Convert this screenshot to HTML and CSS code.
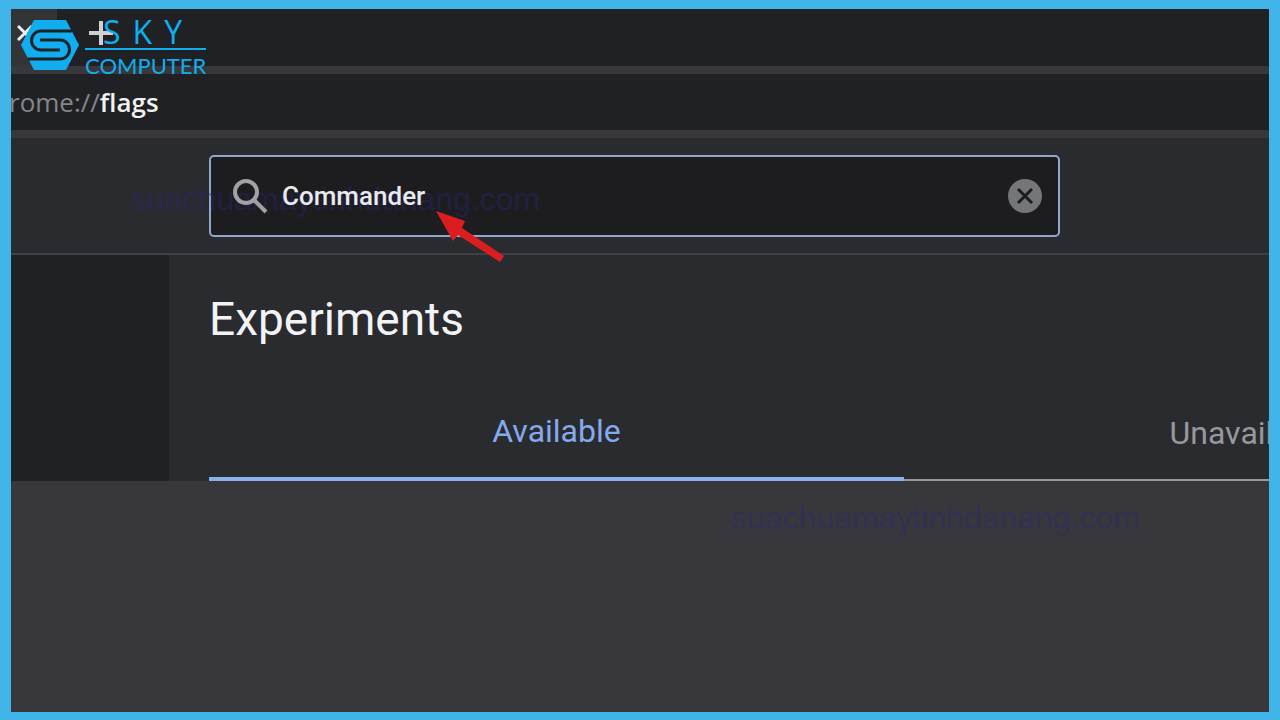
FILE: index.html
```html
<!DOCTYPE html>
<html lang="en">
<head>
    <meta charset="UTF-8">
    <meta name="viewport" content="width=device-width, initial-scale=1.0">
    <title>Experiments</title>
    <link rel="stylesheet" href="styles.css">
</head>
<body>
    <div class="tab-strip">
        <div class="tab">
            <button class="tab-close" aria-label="Close tab">
                <svg width="16" height="16" viewBox="0 0 16 16"><path d="M1 1L15 15M15 1L1 15"/></svg>
            </button>
        </div>
        <button class="tab-new" aria-label="New tab">
            <svg width="24" height="24" viewBox="0 0 24 24"><path d="M12 0V24M0 12H24"/></svg>
        </button>
    </div>

    <div class="address-bar"><span class="scheme">rome://</span><span class="host">flags</span></div>

    <header class="search-bar">
        <div class="search-box">
            <svg class="search-icon" width="36" height="36" viewBox="0 0 36 36">
                <circle cx="13" cy="14" r="11"/>
                <path d="M21 22L33 34"/>
            </svg>
            <input type="text" class="search-input" value="Commander" aria-label="Search flags">
            <button class="search-clear" aria-label="Clear search">
                <svg width="34" height="34" viewBox="0 0 34 34">
                    <circle cx="17" cy="17" r="17"/>
                    <path d="M10 10L24 24M24 10L10 24"/>
                </svg>
            </button>
            <svg class="arrow" width="74" height="54" viewBox="0 0 74 54">
                <path d="M3 2L32 12L29 19L71 47L67 53L25 26L20 32Z"/>
            </svg>
        </div>
    </header>

    <main class="content">
        <div class="side"></div>
        <div class="panel">
            <h1>Experiments</h1>
            <nav class="tabs">
                <a href="#available" class="active">Available</a>
                <a href="#unavailable">Unavailable</a>
            </nav>
        </div>
    </main>

    <div class="logo">
        <svg class="logo-mark" width="58" height="50" viewBox="0 0 58 50">
            <path class="hex" d="M13 0H45L58 25L45 50H13L0 25Z"/>
            <path class="line" d="M51 11H20A9.500 9.500 0 0 0 20 30H39"/>
            <path class="line" d="M19 20H39A9.500 9.500 0 0 1 39 39H7"/>
        </svg>
        <div class="logo-text">
            <span class="logo-name">SKY</span>
            <span class="logo-sub">COMPUTER</span>
        </div>
    </div>
    <span class="watermark watermark-top">suachuamaytinhdanang.com</span>
    <span class="watermark watermark-bottom">suachuamaytinhdanang.com</span>
</body>
</html>
```
FILE: styles.css
```css
* {
    box-sizing: border-box;
}

body {
    position: relative;
    margin: 0;
    min-height: 100vh;
    border: solid #41b4e9;
    border-width: 9px 11px 8px;
    background-color: #38383c;
    font-family: Roboto, sans-serif;
    overflow: hidden;
}

button {
    display: flex;
    padding: 0;
    border: none;
    background: none;
    cursor: pointer;
}

svg {
    fill: none;
}

/* Browser bars */
.tab-strip {
    display: flex;
    align-items: flex-start;
    gap: 32px;
    height: 65px;
    border-bottom: 8px solid #38383c;
    background-color: #202125;
}

.tab {
    width: 46px;
    height: 57px;
    padding: 16px 6px;
    background-color: #333438;
}

.tab-close svg {
    stroke: #eeeeee;
    stroke-width: 3;
}

.tab-new {
    padding-top: 12px;
}

.tab-new svg {
    stroke: #d0d0d0;
    stroke-width: 4;
}

.address-bar {
    height: 64px;
    margin-left: -2px;
    border-bottom: 8px solid #38383c;
    background-color: #202125;
    font-family: "Open Sans", sans-serif;
    font-size: 26px;
    line-height: 56px;
}

.scheme {
    color: #85868a;
}

.host {
    color: #f2f2f2;
    font-weight: 600;
}

/* Search */
.search-bar {
    height: 117px;
    padding: 17px 209px 17px 198px;
    border-bottom: 2px solid #3e4145;
    background-color: #2a2b2f;
}

.search-box {
    position: relative;
    display: flex;
    align-items: center;
    height: 82px;
    padding: 0 16px 0 22px;
    border: 2px solid #8fa9cc;
    border-radius: 5px;
    background-color: #1d1d20;
}

/* keeps the icon and the query above the watermark */
.search-icon,
.search-input {
    position: relative;
    z-index: 1;
}

.search-icon {
    stroke: #a2a2a4;
    stroke-width: 4;
}

.search-input {
    flex: 1;
    min-width: 0;
    padding: 0 12px 0 13px;
    border: none;
    outline: none;
    background: none;
    color: #e8eaed;
    font-family: Roboto, sans-serif;
    font-size: 26px;
    font-weight: 500;
}

.search-clear svg {
    fill: #74767a;
}

.search-clear path {
    stroke: #1d1d20;
    stroke-width: 3;
}

.arrow {
    position: absolute;
    left: 222px;
    top: 52px;
    z-index: 1;
    fill: #dc1d20;
}

/* Experiments */
.content {
    display: flex;
    height: 226px;
    background-color: #2a2b2f;
}

.side {
    flex: none;
    width: 158px;
    background-color: #202125;
}

.panel {
    flex: 1;
    min-width: 0;
    display: flex;
    flex-direction: column;
    justify-content: space-between;
    padding: 36px 0 0 40px;
    overflow: hidden;
}

h1 {
    margin: 0;
    color: #f1f3f4;
    font-size: 46px;
    font-weight: 400;
    line-height: 56px;
}

.tabs {
    display: flex;
}

.tabs a {
    flex: none;
    width: 695px;
    height: 76px;
    border-bottom: 2px solid #98999d;
    color: #96989c;
    font-size: 32px;
    line-height: 56px;
    text-align: center;
    text-decoration: none;
}

.tabs .active {
    border-bottom: 4px solid #8ab0ee;
    color: #84a9ec;
    line-height: 52px;
}

/* Overlays */
.logo {
    position: absolute;
    left: 10px;
    top: 11px;
    display: flex;
    gap: 6px;
    color: #10aeef;
}

.hex {
    fill: #10aeef;
}

.line {
    stroke: #202125;
    stroke-width: 3;
}

.logo-text {
    display: flex;
    flex-direction: column;
}

.logo-name {
    height: 30px;
    padding-left: 18px;
    border-bottom: 2px solid #10aeef;
    font-family: "Open Sans", sans-serif;
    font-size: 32px;
    line-height: 24px;
    letter-spacing: 12px;
}

.logo-sub {
    font-family: Lato, sans-serif;
    font-size: 22px;
    line-height: 32px;
}

.watermark {
    position: absolute;
    color: rgba(38, 38, 125, 0.4);
    font-family: "Liberation Sans", sans-serif;
    font-size: 32px;
    line-height: 40px;
}

.watermark-top {
    left: 120px;
    top: 170px;
}

.watermark-bottom {
    right: 129px;
    bottom: 174px;
}
```
